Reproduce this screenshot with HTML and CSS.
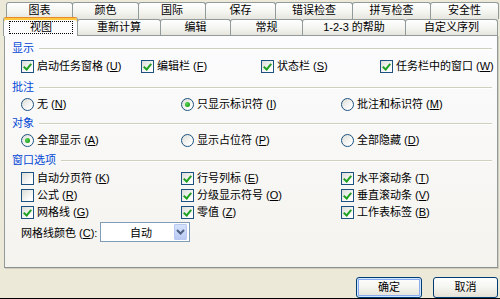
FILE: index.html
```html
<!DOCTYPE html>
<html>
<head>
<meta charset="utf-8">
<link rel="stylesheet" href="styles.css">
</head>
<body>
<div class="window">
  <div class="tabrow row1">
    <div class="tab">图表</div>
    <div class="tab">颜色</div>
    <div class="tab">国际</div>
    <div class="tab">保存</div>
    <div class="tab">错误检查</div>
    <div class="tab">拼写检查</div>
    <div class="tab">安全性</div>
  </div>
  <div class="tabrow row2">
    <div class="tab selected"><span class="focus">视图</span></div>
    <div class="tab">重新计算</div>
    <div class="tab">编辑</div>
    <div class="tab">常规</div>
    <div class="tab">1-2-3 的帮助</div>
    <div class="tab">自定义序列</div>
  </div>
  <div class="panel">
    <div class="group-title first"><span>显示</span><i class="rule"></i></div>
    <div class="row cols4 m3">
      <label class="opt"><span class="cb checked"></span><span>启动任务窗格 (<u>U</u>)</span></label>
      <label class="opt"><span class="cb checked"></span><span>编辑栏 (<u>F</u>)</span></label>
      <label class="opt"><span class="cb checked"></span><span>状态栏 (<u>S</u>)</span></label>
      <label class="opt"><span class="cb checked"></span><span>任务栏中的窗口 (<u>W</u>)</span></label>
    </div>
    <div class="group-title m5"><span>批注</span><i class="rule"></i></div>
    <div class="row cols3 m2">
      <label class="opt"><span class="rb"></span><span>无 (<u>N</u>)</span></label>
      <label class="opt"><span class="rb on"></span><span>只显示标识符 (<u>I</u>)</span></label>
      <label class="opt"><span class="rb"></span><span>批注和标识符 (<u>M</u>)</span></label>
    </div>
    <div class="group-title m3"><span>对象</span><i class="rule"></i></div>
    <div class="row cols3 m2">
      <label class="opt"><span class="rb on"></span><span>全部显示 (<u>A</u>)</span></label>
      <label class="opt"><span class="rb"></span><span>显示占位符 (<u>P</u>)</span></label>
      <label class="opt"><span class="rb"></span><span>全部隐藏 (<u>D</u>)</span></label>
    </div>
    <div class="group-title m4"><span>窗口选项</span><i class="rule"></i></div>
    <div class="row cols3 m3">
      <label class="opt"><span class="cb"></span><span>自动分页符 (<u>K</u>)</span></label>
      <label class="opt"><span class="cb checked"></span><span>行号列标 (<u>E</u>)</span></label>
      <label class="opt"><span class="cb checked"></span><span>水平滚动条 (<u>T</u>)</span></label>
    </div>
    <div class="row cols3">
      <label class="opt"><span class="cb"></span><span>公式 (<u>R</u>)</span></label>
      <label class="opt"><span class="cb checked"></span><span>分级显示符号 (<u>O</u>)</span></label>
      <label class="opt"><span class="cb checked"></span><span>垂直滚动条 (<u>V</u>)</span></label>
    </div>
    <div class="row cols3">
      <label class="opt"><span class="cb checked"></span><span>网格线 (<u>G</u>)</span></label>
      <label class="opt"><span class="cb checked"></span><span>零值 (<u>Z</u>)</span></label>
      <label class="opt"><span class="cb checked"></span><span>工作表标签 (<u>B</u>)</span></label>
    </div>
    <div class="combo-row">
      <span class="combo-label">网格线颜色 (<u>C</u>):</span>
      <div class="combo">
        <span class="combo-text">自动</span>
        <span class="combo-btn"><svg width="9" height="6" viewBox="0 0 9 6"><polyline points="1,1 4.5,4.5 8,1" fill="none" stroke="#4d6185" stroke-width="2"/></svg></span>
      </div>
    </div>
  </div>
  <div class="footer">
    <div class="btn default"><span>确定</span></div>
    <div class="btn"><span>取消</span></div>
  </div>
</div>
</body>
</html>
```
FILE: styles.css
```css
* { box-sizing: border-box; }
html, body { margin: 0; padding: 0; }
body {
  width: 500px;
  height: 299px;
  overflow: hidden;
  background: #ece9d8;
  font-family: "Liberation Sans", "Noto Sans CJK SC", sans-serif;
  font-size: 11px;
  color: #000;
}
.window {
  width: 500px;
  height: 299px;
  border-bottom: 1px solid #000;
  display: flex;
  flex-direction: column;
  overflow: hidden;
  background: #ece9d8;
}
u { text-decoration: underline; }

/* tabs */
.tabrow { display: grid; position: relative; }
.row1 {
  margin-top: 2px;
  margin-left: 6px;
  height: 17px;
  grid-template-columns: 66px 66px 67px 70px 77px 78px 68px;
  z-index: 1;
}
.row2 {
  margin-top: -2px;
  margin-left: 3px;
  height: 18px;
  grid-template-columns: 74px 83px 70px 72px 103px 92px;
  align-items: end;
  z-index: 2;
}
.tab {
  height: 17px;
  border: 1px solid #919b9c;
  border-bottom: none;
  border-radius: 3px 3px 0 0;
  background: linear-gradient(#ffffff, #f3f3ef 60%, #e6e5dd);
  display: flex;
  align-items: center;
  justify-content: center;
  line-height: 13px;
  padding-bottom: 1px;
  margin-right: -1px;
  white-space: pre;
}
.row1 .tab { height: 17px; padding-bottom: 2px; }
.row2 .tab { height: 16px; }
.row2 .tab.selected {
  height: 19px;
  margin-bottom: -1px;
  background: #fcfcfe;
  border-top: 1px solid #e68b2c;
  box-shadow: inset 0 2px 0 #ffc83c;
  position: relative;
  z-index: 3;
  padding: 2px 4px 2px 5px;
}
.focus {
  flex: 1;
  height: 13px;
  border: 1px dotted #000;
  display: flex;
  align-items: center;
  justify-content: center;
}

/* panel */
.panel {
  margin-left: 4px;
  width: 494px;
  height: 235px;
  border: 1px solid #919b9c;
  border-bottom-color: #8a9294;
  box-shadow: 1px 1px 0 #d0cdbf;
  background: linear-gradient(#fcfcfe, #f4f3ee);
  padding: 5px 0 0 7px;
  display: flex;
  flex-direction: column;
  position: relative;
  z-index: 1;
}
.group-title {
  height: 14px;
  line-height: 14px;
  display: flex;
  align-items: center;
  color: #0046d5;
}
.rule {
  flex: 1;
  height: 2px;
  margin: 1px 5px 0 5px;
  border-top: 1px solid #d0d0bf;
  border-bottom: 1px solid #fff;
}
.m2 { margin-top: 2px; }
.m3 { margin-top: 3px; }
.m4 { margin-top: 4px; }
.m5 { margin-top: 5px; }

.row {
  display: grid;
  height: 17px;
  padding-left: 9px;
  align-items: center;
}
.cols4 { grid-template-columns: 120px 120px 119px 120px; }
.cols3 { grid-template-columns: 160px 160px 160px; }
.opt {
  display: flex;
  align-items: center;
  gap: 3px;
  white-space: nowrap;
  line-height: 13px;
}
.cb {
  width: 13px;
  height: 13px;
  border: 1px solid #1c5180;
  background: linear-gradient(135deg, #dcdcd7, #ffffff 80%);
  flex: none;
  position: relative;
}
.cb.checked::after {
  content: "";
  position: absolute;
  left: 3px;
  top: 1px;
  width: 3px;
  height: 6px;
  border-right: 2px solid #21a121;
  border-bottom: 2px solid #21a121;
  transform: rotate(40deg);
}
.rb {
  width: 13px;
  height: 13px;
  border-radius: 50%;
  border: 1px solid #1c5180;
  background: linear-gradient(135deg, #dcdcd7, #ffffff 80%);
  flex: none;
  position: relative;
}
.rb.on::after {
  content: "";
  position: absolute;
  left: 3px;
  top: 3px;
  width: 5px;
  height: 5px;
  border-radius: 50%;
  background: radial-gradient(circle at 35% 35%, #55d551, #21a121 70%);
}

.combo-row {
  margin-top: 1px;
  padding-left: 9px;
  height: 20px;
  display: flex;
  align-items: center;
}
.combo-label { width: 79px; white-space: nowrap; }
.combo {
  width: 90px;
  height: 20px;
  border: 1px solid #7f9db9;
  background: #fff;
  display: flex;
  align-items: center;
  padding: 1px;
}
.combo-text { flex: 1; text-align: center; padding-left: 6px; }
.combo-btn {
  width: 13px;
  height: 16px;
  margin-right: 1px;
  background: linear-gradient(#d6e2fb, #b9cbf3);
  border: 1px solid #b8c8f0;
  border-radius: 1px;
  display: flex;
  align-items: center;
  justify-content: center;
}

/* footer */
.footer {
  display: flex;
  justify-content: flex-end;
  gap: 11px;
  padding: 9px 2px 0 0;
}
.btn {
  width: 66px;
  height: 21px;
  border: 1px solid #003c74;
  border-radius: 3px;
  background: linear-gradient(#ffffff, #f4f4f0 50%, #e3e1d6);
  display: flex;
  align-items: center;
  justify-content: center;
  line-height: 13px;
  flex: none;
}
.btn + .btn { width: 65px; }
.btn.default {
  box-shadow: inset 0 0 0 1px #cee7ff, inset 0 0 0 2px #8aa9ee;
}
```
